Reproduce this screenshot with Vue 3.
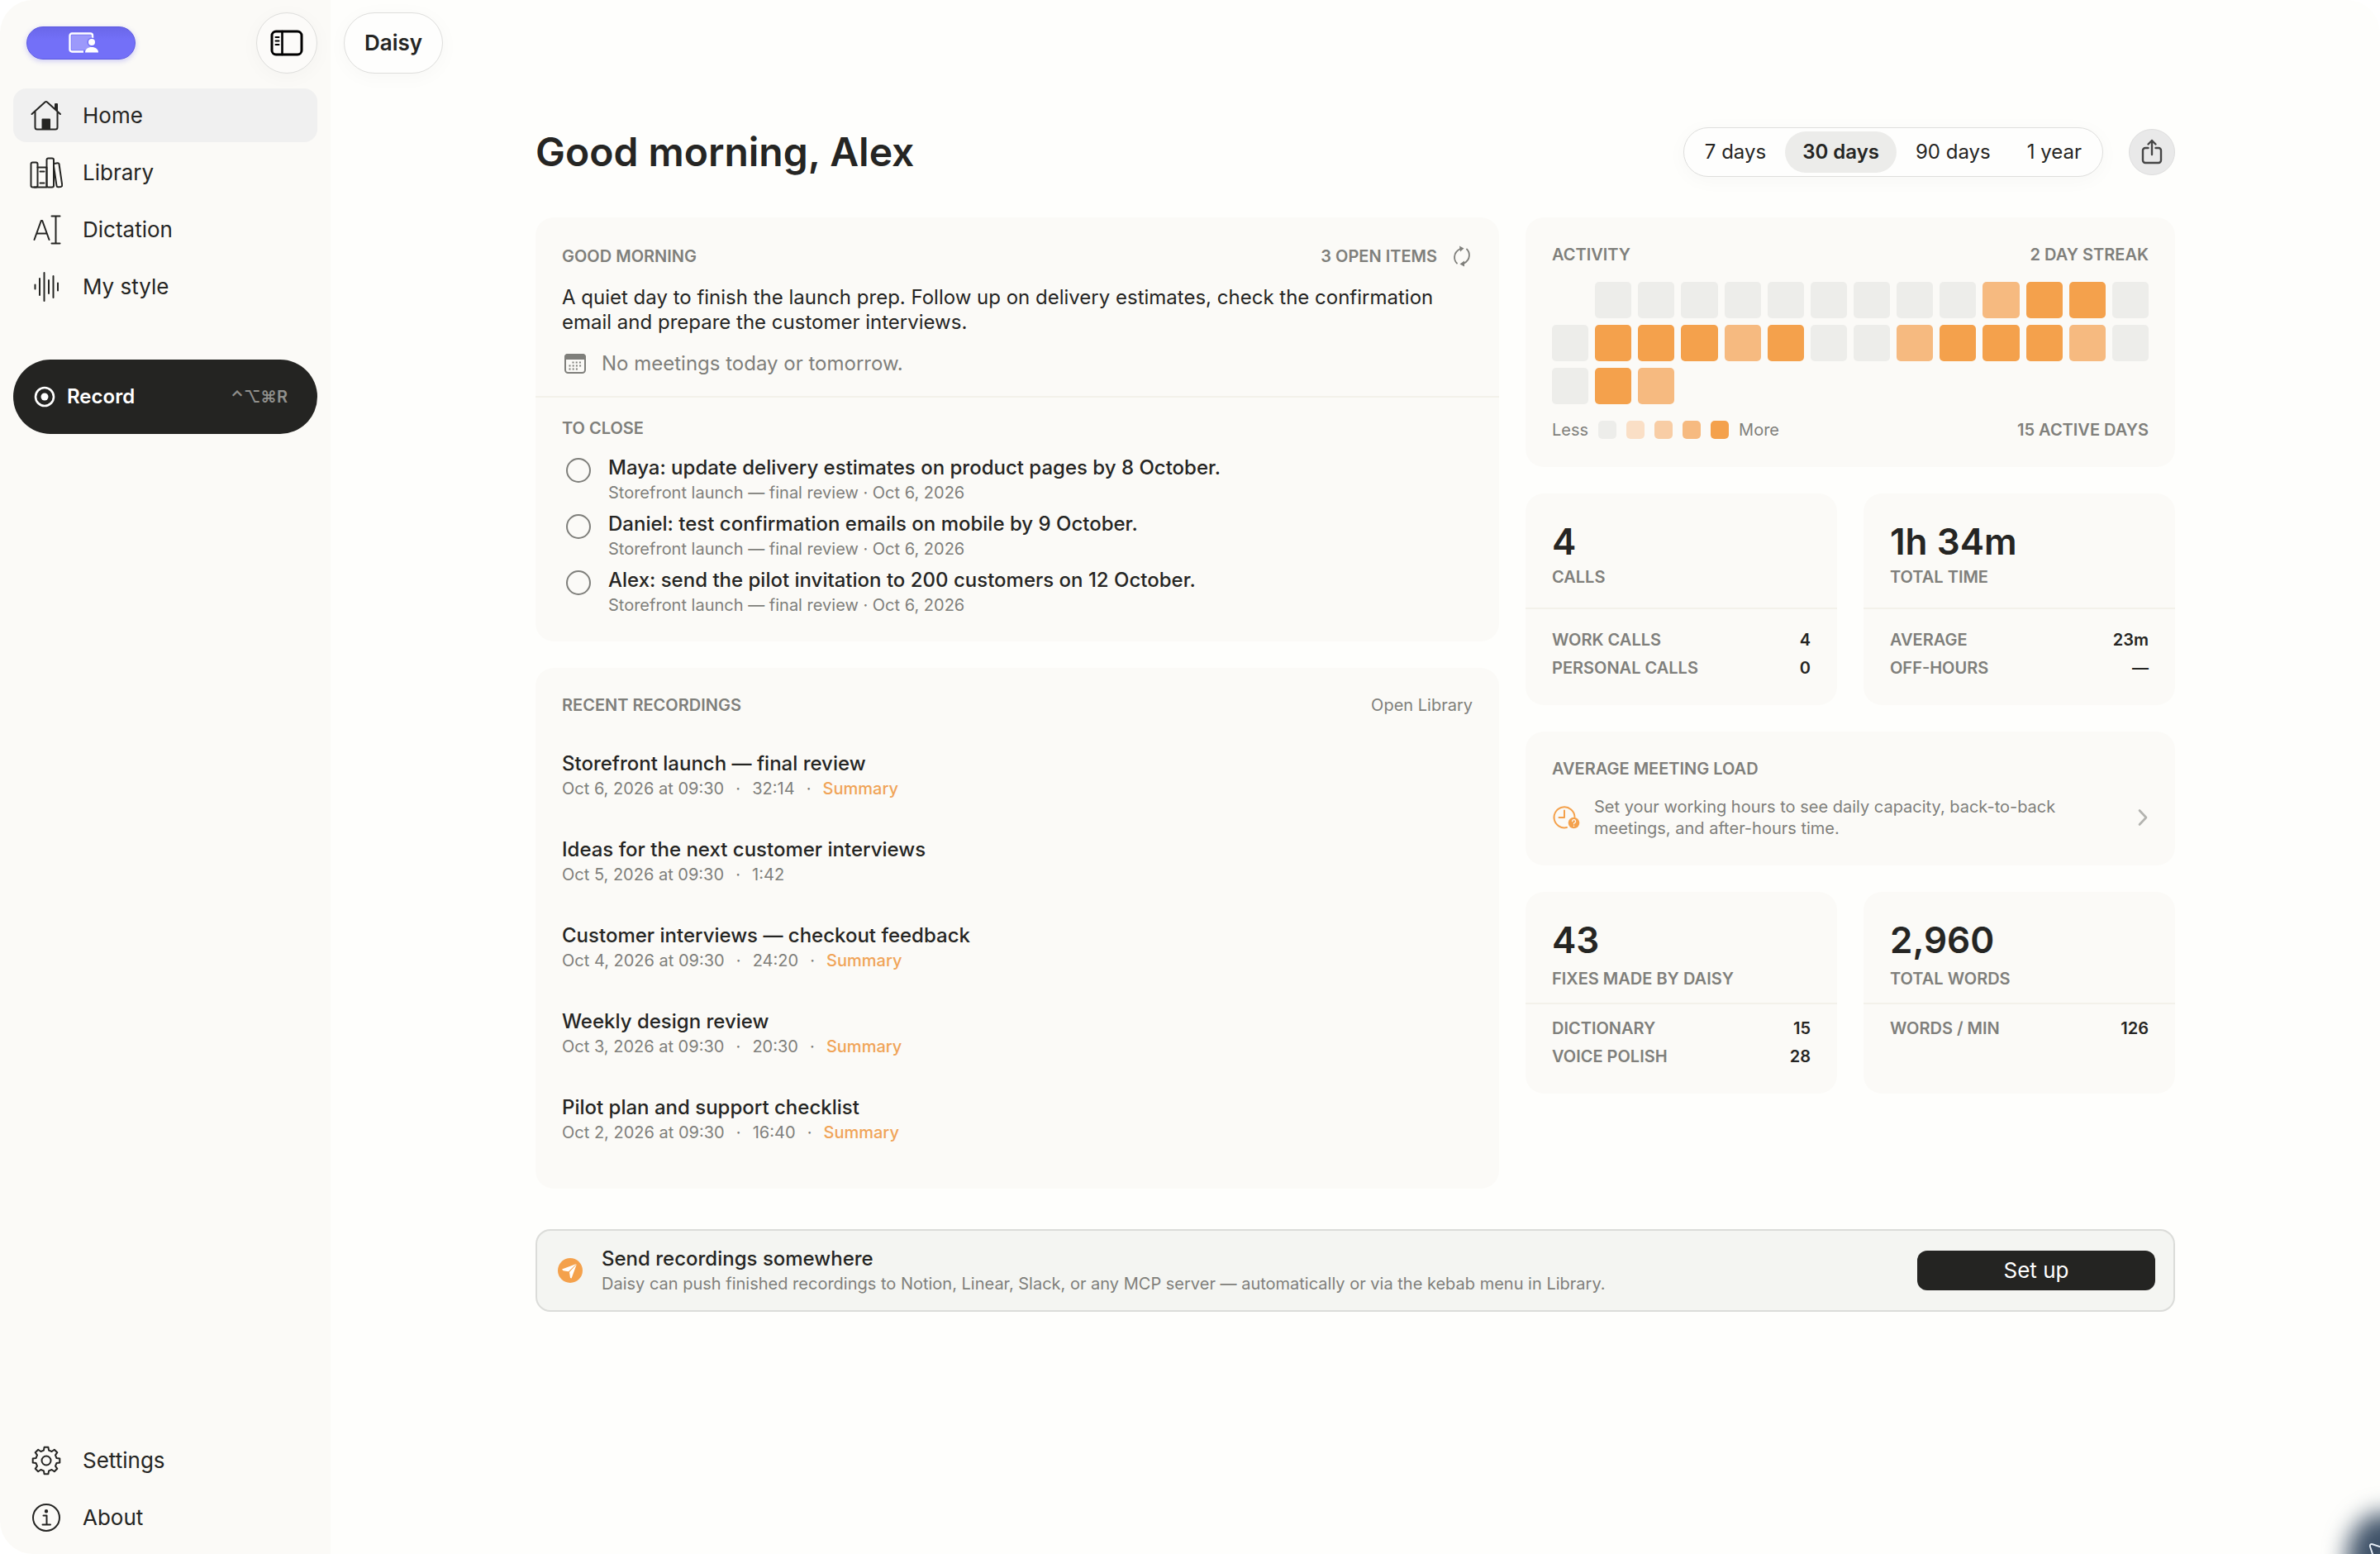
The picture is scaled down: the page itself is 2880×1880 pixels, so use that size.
<template>
  <div class="app">
    <aside class="sidebar">
      <div class="sidebar-top">
        <button class="share-screen" aria-label="Screen sharing">
          <svg width="36" height="26" viewBox="0 0 36 26">
            <rect x="3.5" y="3.5" width="24" height="18" fill="#9c99fb" />
            <path d="M29 7V4a2.5 2.5 0 0 0-2.5-2.5H4A2.5 2.5 0 0 0 1.5 4v17A2.5 2.5 0 0 0 4 23.5h14" fill="none" stroke="#fff" stroke-width="2.4" />
            <circle cx="28" cy="12" r="5.5" fill="#716ef6" />
            <circle cx="28" cy="12" r="4" fill="#fff" />
            <path d="M20 24.5c0-4 3.5-6.5 8-6.5s8 2.5 8 6.5z" fill="#fff" />
          </svg>
        </button>
        <button class="toggle glass" aria-label="Toggle sidebar">
          <svg width="40" height="32" viewBox="0 0 40 32" fill="none" stroke="#000" stroke-linecap="round">
            <rect x="2" y="2" width="36" height="28" rx="5" stroke-width="3" />
            <path d="M14.5 2v28" stroke-width="2.6" />
            <path d="M6.5 9h4M6.5 13.5h4M6.5 18h4" stroke-width="2" />
          </svg>
        </button>
      </div>

      <nav class="nav">
        <a v-for="item in mainNav" :key="item.label" href="#" class="nav-item" :class="{ active: item.active }">
          <svg width="40" height="40" viewBox="0 0 40 40" fill="none" stroke="currentColor" stroke-width="2" stroke-linecap="round" stroke-linejoin="round" v-html="item.icon" />
          <span>{{ item.label }}</span>
        </a>
      </nav>

      <button class="record">
        <svg width="26" height="26" viewBox="0 0 26 26">
          <circle cx="13" cy="13" r="11" fill="none" stroke="#fff" stroke-width="2.6" />
          <circle cx="13" cy="13" r="4.5" fill="#fff" />
        </svg>
        <span>Record</span>
        <kbd>⌃⌥⌘R</kbd>
      </button>

      <nav class="nav nav-bottom">
        <a v-for="item in footNav" :key="item.label" href="#" class="nav-item">
          <svg width="40" height="40" viewBox="0 0 40 40" fill="none" stroke="currentColor" stroke-width="2" stroke-linecap="round" stroke-linejoin="round" v-html="item.icon" />
          <span>{{ item.label }}</span>
        </a>
      </nav>
    </aside>

    <main class="main">
      <div class="toolbar">
        <button class="tab glass">Daisy</button>
      </div>

      <div class="content">
        <header class="page-head">
          <h1>Good morning, Alex</h1>
          <div class="range glass">
            <button v-for="r in ranges" :key="r" :class="{ on: r === range }" @click="range = r">{{ r }}</button>
          </div>
          <button class="export" aria-label="Share">
            <svg width="28" height="32" viewBox="0 0 28 32" fill="none" stroke="#454545" stroke-width="2.4" stroke-linecap="round" stroke-linejoin="round">
              <path d="M9.5 11H6a3 3 0 0 0-3 3v12a3 3 0 0 0 3 3h16a3 3 0 0 0 3-3V14a3 3 0 0 0-3-3h-3.5" />
              <path d="M14 19V2M9.5 6.5 14 2l4.5 4.5" />
            </svg>
          </button>
        </header>

        <div class="columns">
          <div class="col">
            <section class="card">
              <div class="brief">
                <div class="row">
                  <h2 class="caps">Good morning</h2>
                  <div class="open-items">
                    <span class="caps">3 open items</span>
                    <button aria-label="Refresh">
                      <svg width="26" height="26" viewBox="0 0 26 26" fill="none" stroke="#7f7f7b" stroke-width="1.8" stroke-linecap="round">
                        <path d="M7 21.5C3.5 18 1.5 9 11 4M19 4.5c3.5 3.5 5.5 12.5-4 17.5" />
                        <path d="M10 .5 15.5 3.5 11 7.5zM16 18.5 10.5 22.5 16 25.5z" fill="#7f7f7b" stroke="none" />
                      </svg>
                    </button>
                  </div>
                </div>
                <p class="brief-text">A quiet day to finish the launch prep. Follow up on delivery estimates, check the confirmation email and prepare the customer interviews.</p>
                <div class="meetings">
                  <svg width="32" height="26" viewBox="0 0 32 26">
                    <rect x="4" y="2" width="24" height="22" rx="3.5" fill="none" stroke="#7f7f7b" stroke-width="2" />
                    <path d="M3 8V5a4 4 0 0 1 4-4h18a4 4 0 0 1 4 4v3z" fill="#7f7f7b" />
                    <path d="M12.5 11.5h11M8.5 15.5h15M8.5 19.5h11" stroke="#7f7f7b" stroke-width="2" stroke-dasharray="2 2.2" />
                  </svg>
                  <span>No meetings today or tomorrow.</span>
                </div>
              </div>
              <div class="todo">
                <h2 class="caps">To close</h2>
                <label v-for="t in todos" :key="t" class="todo-item">
                  <input type="checkbox">
                  <span class="todo-text">
                    <span class="title">{{ t }}</span>
                    <span class="small">Storefront launch — final review · Oct 6, 2026</span>
                  </span>
                </label>
              </div>
            </section>

            <section class="card recent">
              <div class="row">
                <h2 class="caps">Recent recordings</h2>
                <a href="#" class="small">Open Library</a>
              </div>
              <ul>
                <li v-for="r in recordings" :key="r.title">
                  <div class="title">{{ r.title }}</div>
                  <div class="small meta">
                    <span>{{ r.date }} at 09:30</span><i>·</i><span>{{ r.length }}</span>
                    <template v-if="r.summary"><i>·</i><a href="#" class="summary">Summary</a></template>
                  </div>
                </li>
              </ul>
            </section>
          </div>

          <div class="col">
            <section class="card activity">
              <div class="row">
                <h2 class="caps">Activity</h2>
                <span class="caps">2 day streak</span>
              </div>
              <div class="heat">
                <span v-for="(lv, i) in days" :key="i" :class="'lv' + lv" />
              </div>
              <div class="row">
                <div class="legend small">
                  <span>Less</span>
                  <i v-for="lv in '01234'" :key="lv" :class="'lv' + lv" />
                  <span>More</span>
                </div>
                <span class="caps">15 active days</span>
              </div>
            </section>

            <div class="pair">
              <section v-for="s in callStats" :key="s.label" class="card stat">
                <div class="stat-head">
                  <strong>{{ s.value }}</strong>
                  <h2 class="caps">{{ s.label }}</h2>
                </div>
                <dl>
                  <div v-for="[k, v] in s.rows" :key="k"><dt class="caps">{{ k }}</dt><dd>{{ v }}</dd></div>
                </dl>
              </section>
            </div>

            <section class="card load">
              <h2 class="caps">Average meeting load</h2>
              <a href="#" class="load-row">
                <svg width="34" height="30" viewBox="0 0 34 30">
                  <g fill="none" stroke="#f4a14c" stroke-width="2" stroke-linecap="round" stroke-linejoin="round">
                    <path d="M27.5 14A12.5 12.5 0 1 0 18 27" />
                    <path d="M15 6.5V15H8.5" />
                  </g>
                  <circle cx="26.5" cy="21.5" r="6.8" fill="#f4a14c" />
                  <path d="M24.6 19.7a2 2 0 1 1 2.8 1.8c-.7.3-.9.7-.9 1.3M26.5 25.2v.2" fill="none" stroke="#fbfaf7" stroke-width="1.3" stroke-linecap="round" />
                </svg>
                <span class="small">Set your working hours to see daily capacity, back-to-back meetings, and after-hours time.</span>
                <svg width="14" height="22" viewBox="0 0 14 22" fill="none" stroke="#b3b3af" stroke-width="2.6" stroke-linecap="round" stroke-linejoin="round">
                  <path d="m3 2.5 8 8.5-8 8.5" />
                </svg>
              </a>
            </section>

            <div class="pair">
              <section v-for="s in wordStats" :key="s.label" class="card stat compact">
                <div class="stat-head">
                  <strong>{{ s.value }}</strong>
                  <h2 class="caps">{{ s.label }}</h2>
                </div>
                <dl>
                  <div v-for="[k, v] in s.rows" :key="k"><dt class="caps">{{ k }}</dt><dd>{{ v }}</dd></div>
                </dl>
              </section>
            </div>
          </div>
        </div>

        <section class="banner">
          <svg width="30" height="30" viewBox="0 0 30 30">
            <circle cx="15" cy="15" r="15" fill="#f4a14c" />
            <path d="M22.5 7 5 13.5l1.5 1.8 6.5.9zM22.8 7.5 14 17l1 7 1.6.5z" fill="#fff" />
          </svg>
          <div class="banner-text">
            <div class="title">Send recordings somewhere</div>
            <div class="small">Daisy can push finished recordings to Notion, Linear, Slack, or any MCP server — automatically or via the kebab menu in Library.</div>
          </div>
          <button class="setup">Set up</button>
        </section>
      </div>
    </main>

    <div class="corner" />
    <svg class="corner-pointer" width="14" height="14" viewBox="0 0 14 14" fill="#3c4e64" stroke="#e6edf5" stroke-width="2" stroke-linejoin="round">
      <path d="M16 6 5 2.2Q1.5 1.5 2 5l4 12" />
    </svg>
  </div>
</template>

<script setup>
import { ref } from 'vue'

const mainNav = [
  { label: 'Home', active: true, icon: '<path d="M2.5 18 18.5 3.5a2 2 0 0 1 2.5 0L37 18M6.5 15v19a2.5 2.5 0 0 0 2.5 2.5h22a2.5 2.5 0 0 0 2.5-2.5V15M31 12V6h2v8"/><path d="M15.5 36V24.5h8.5V36z" fill="currentColor"/>' },
  { label: 'Library', icon: '<rect x="1.5" y="7.5" width="8" height="30" rx="2"/><path d="M9.5 13.5h11v24h-15M12.5 18.5h5M12.5 32.5h5"/><rect x="20.5" y="2.5" width="8.5" height="35" rx="2"/><path d="m29.5 9 4.2-.8a1.5 1.5 0 0 1 1.8 1.3l3.7 25.2a2 2 0 0 1-1.7 2.3l-2.8.3a2 2 0 0 1-2.2-1.7L29 12"/>' },
  { label: 'Dictation', icon: '<path d="M5.5 32 13.8 9h1.4l8.3 23M8.5 24.5h12M26.5 3.5h10M31.5 3.5v33M26.5 36.5h10"/>' },
  { label: 'My style', icon: '<path d="M6.5 17.5v5M12 10v20M17.5 3v34M23 12v16M28.5 7v26M34 15.5v9"/>' },
]
const footNav = [
  { label: 'Settings', icon: gearIcon() },
  { label: 'About', icon: '<circle cx="20" cy="20" r="16"/><path d="M16.5 17.5h4V28M15.5 28.5h9.5"/><circle cx="20" cy="12.3" r="1.2" fill="currentColor"/>' },
]

// eight teeth round a hub
function gearIcon() {
  const pts = []
  for (let i = 0; i < 8; i++) {
    for (const [off, r] of [[-14, 12.8], [-8.5, 16.5], [8.5, 16.5], [14, 12.8]]) {
      const a = (i * 45 + off) * Math.PI / 180
      pts.push(`${(20 + r * Math.sin(a)).toFixed(1)} ${(20 - r * Math.cos(a)).toFixed(1)}`)
    }
  }
  return `<path d="M${pts.join('L')}z"/><circle cx="20" cy="20" r="5.5"/>`
}

const ranges = ['7 days', '30 days', '90 days', '1 year']
const range = ref('30 days')

const todos = [
  'Maya: update delivery estimates on product pages by 8 October.',
  'Daniel: test confirmation emails on mobile by 9 October.',
  'Alex: send the pilot invitation to 200 customers on 12 October.',
]

const recordings = [
  { title: 'Storefront launch — final review', date: 'Oct 6, 2026', length: '32:14', summary: true },
  { title: 'Ideas for the next customer interviews', date: 'Oct 5, 2026', length: '1:42' },
  { title: 'Customer interviews — checkout feedback', date: 'Oct 4, 2026', length: '24:20', summary: true },
  { title: 'Weekly design review', date: 'Oct 3, 2026', length: '20:30', summary: true },
  { title: 'Pilot plan and support checklist', date: 'Oct 2, 2026', length: '16:40', summary: true },
]

// x = outside the range, 0-4 = intensity
const days = 'x0000000003440' + '04443400344430' + '043'

const callStats = [
  { value: '4', label: 'Calls', rows: [['Work calls', '4'], ['Personal calls', '0']] },
  { value: '1h 34m', label: 'Total time', rows: [['Average', '23m'], ['Off-hours', '—']] },
]
const wordStats = [
  { value: '43', label: 'Fixes made by Daisy', rows: [['Dictionary', '15'], ['Voice polish', '28']] },
  { value: '2,960', label: 'Total words', rows: [['Words / min', '126']] },
]
</script>

<style>
body { margin: 0; background: #fff; }
</style>

<style scoped>
* { box-sizing: border-box; }
.app {
  position: relative; display: flex; min-height: 100vh; overflow: hidden; border-radius: 40px 40px 0 40px;
  background: #fefefc; color: #252523; font-family: Inter, "Liberation Sans", sans-serif; font-size: 24px; line-height: 30px;
}
button { font: inherit; color: inherit; border: 0; padding: 0; background: none; }
a { color: inherit; text-decoration: none; }
h1, h2, p, ul, dl, dd { margin: 0; padding: 0; }
svg { flex: none; display: block; }

.glass { border: 1px solid #dededc; background: #fefefd; box-shadow: 0 4px 24px rgba(0, 0, 0, 0.03); }

/* sidebar */
.sidebar { width: 400px; flex: none; display: flex; flex-direction: column; padding: 15px 16px 12px; background: #fbfaf7; }
.sidebar-top { display: flex; align-items: center; justify-content: space-between; padding-left: 16px; margin-bottom: 18px; }
.share-screen {
  display: flex; align-items: center; justify-content: center; width: 132px; height: 40px; border-radius: 20px; padding-left: 6px;
  background: linear-gradient(#6a67e9, #7370f8 40%); border: 1px solid #5c59e0; box-shadow: 0 2px 6px rgba(100, 96, 240, 0.3);
}
.toggle { display: flex; align-items: center; justify-content: center; width: 74px; height: 74px; border-radius: 50%; background: #fcfbf9; }
.nav { display: flex; flex-direction: column; gap: 4px; }
.nav-item { display: flex; align-items: center; gap: 24px; height: 65px; padding-left: 20px; border-radius: 16px; font-size: 26px; }
.nav-item.active { background: #f0f0f0; }
.nav-bottom { margin-top: auto; }
.record {
  display: flex; align-items: center; gap: 14px; height: 90px; margin-top: 56px; padding: 0 36px 0 25px;
  border-radius: 45px; background: #242422; color: #fff; font-size: 24px; font-weight: 600;
}
.record kbd { margin-left: auto; color: #90908d; font: 600 20px Inter, "DejaVu Sans", sans-serif; }

/* main */
.main { flex: 1; min-width: 0; padding: 15px 16px; }
.tab { display: block; width: 120px; height: 74px; border-radius: 37px; font-size: 26px; font-weight: 600; }
.content { max-width: 1984px; margin: 65px auto 0; }
.page-head { display: flex; align-items: center; margin-bottom: 49px; }
.page-head h1 { margin-right: auto; font-size: 48px; line-height: 60px; font-weight: 600; }
.range { display: flex; align-items: center; gap: 2px; height: 60px; padding: 0 4px; border-radius: 30px; }
.range button { height: 50px; padding: 0 21px; border-radius: 25px; }
.range .on { background: #ececea; font-weight: 600; }
.export { display: flex; align-items: center; justify-content: center; width: 56px; height: 56px; margin-left: 31px; border-radius: 50%; background: #e9e9e9; border: 1px solid #dedede; }

.columns { display: grid; grid-template-columns: 1166fr 786fr; gap: 32px; align-items: start; }
.col { display: flex; flex-direction: column; gap: 32px; min-width: 0; }
.card { border-radius: 22px; background: #fbfaf7; }
.row { display: flex; align-items: center; justify-content: space-between; }
.caps { font-size: 20px; line-height: 26px; font-weight: 600; text-transform: uppercase; color: #7f7f7b; }
.small { font-size: 20px; line-height: 26px; color: #7f7f7b; }
.title { display: block; font-weight: 500; }

.brief { padding: 34px 32px 24px; border-bottom: 2px solid #f3f1ea; }
.open-items { display: flex; align-items: center; gap: 17px; }
.brief-text { margin: 22px 0 20px; }
.meetings { display: flex; align-items: center; gap: 16px; color: #7f7f7b; }
.todo { padding: 24px 32px 21px; }
.todo h2 { margin-bottom: 20px; }
.todo-item { display: flex; gap: 21px; padding: 0 5px 10px; }
.todo-item input { appearance: none; flex: none; width: 30px; height: 30px; margin: 3px 0 0; border: 2px solid #7f7f7b; border-radius: 50%; }
.todo-text .small { display: block; margin-top: 2px; }

.recent { padding: 32px 32px 9px; }
.recent ul { list-style: none; margin-top: 43px; }
.recent li { height: 104px; }
.meta { display: flex; margin-top: 2px; }
.meta i { width: 34px; text-align: center; font-style: normal; }
.summary { color: #f0a458; font-weight: 500; }

.activity { padding: 32px; }
.heat { display: grid; grid-template-columns: repeat(14, 1fr); grid-auto-rows: 44px; gap: 8px; margin: 20px 0 18px; }
.heat span { border-radius: 5px; }
.legend { display: flex; align-items: center; gap: 12px; }
.legend i { width: 22px; height: 22px; border-radius: 5px; }
.lv0 { background: #ededea; }
.lv1 { background: #fadfc6; }
.lv2 { background: #f8cda5; }
.lv3 { background: #f6ba80; }
.lv4 { background: #f4a14c; }

.pair { display: grid; grid-template-columns: 1fr 1fr; gap: 32px; }
.stat-head { padding: 32px 32px 24px; border-bottom: 2px solid #f3f1ea; }
.stat-head strong { display: block; margin-bottom: 4px; font-size: 44px; line-height: 52px; font-weight: 600; }
.stat dl { padding: 20px 32px 28px; }
.stat dl div { display: flex; justify-content: space-between; padding: 4px 0; line-height: 26px; }
.stat dd { font-size: 20px; font-weight: 600; }
.compact .stat-head { padding-bottom: 16px; }
.compact .stat-head strong { margin-bottom: 8px; }
.compact dl { padding-top: 12px; }

.load { padding: 32px; }
.load-row { display: flex; align-items: center; gap: 17px; margin-top: 20px; }
.load-row .small { flex: 1; max-width: 630px; margin-right: auto; }

.banner { display: flex; align-items: center; height: 100px; margin-top: 49px; padding: 0 22px 0 25px; border: 2px solid #dbdcd9; border-radius: 18px; background: #f4f5f2; }
.banner-text { flex: 1; padding-left: 23px; }
.banner-text .small { margin-top: 2px; }
.setup { width: 288px; height: 48px; border-radius: 12px; background: #242422; color: #fff; font-size: 26px; }

/* desktop widget peeking in behind the window edge */
.corner { position: absolute; right: -50px; bottom: -60px; width: 90px; height: 110px; border-radius: 50%; background: #3f5268; filter: blur(14px); }
.corner-pointer { position: absolute; right: 0; bottom: 0; }
</style>
